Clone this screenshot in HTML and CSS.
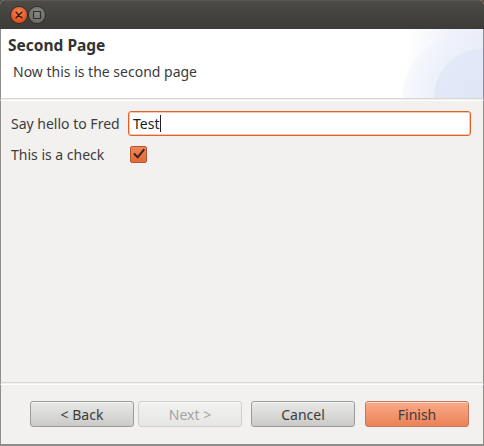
FILE: index.html
```html
<!DOCTYPE html>
<html>
<head>
<meta charset="utf-8">
<link rel="stylesheet" href="styles.css">
</head>
<body>
<div class="window">
  <div class="titlebar">
    <span class="wbtn close"><svg width="16" height="16" viewBox="0 0 16 16"><path d="M5.2 5.2 L10.8 10.8 M10.8 5.2 L5.2 10.8" stroke="#3a1a0c" stroke-width="1.5" stroke-linecap="round"/></svg></span>
    <span class="wbtn max"><svg width="16" height="16" viewBox="0 0 16 16"><rect x="4.5" y="4.5" width="7" height="7" rx="0.5" fill="none" stroke="#2e2e2c" stroke-width="1.2"/></svg></span>
  </div>
  <div class="header">
    <div class="htitle">Second Page</div>
    <div class="hdesc">Now this is the second page</div>
  </div>
  <div class="sep"></div>
  <div class="content">
    <div class="row">
      <span class="label">Say hello to Fred</span>
      <div class="input">Test<span class="caret"></span></div>
    </div>
    <div class="row row-check">
      <span class="label">This is a check</span>
      <span class="check"><svg width="14" height="14" viewBox="0 0 14 14"><path d="M2.5 7 L5.6 10.4 L11.8 2.8" fill="none" stroke="#3e2418" stroke-width="2" stroke-linecap="round" stroke-linejoin="round"/></svg></span>
    </div>
  </div>
  <div class="sep sep-bottom"></div>
  <div class="buttons">
    <button class="btn">&lt; Back</button>
    <button class="btn disabled">Next &gt;</button>
    <button class="btn gap">Cancel</button>
    <button class="btn primary">Finish</button>
  </div>
</div>
</body>
</html>
```
FILE: styles.css
```css
html, body {
  margin: 0;
  padding: 0;
  background: #5b4b40;
}
body {
  font-family: "Noto Sans", "DejaVu Sans", sans-serif;
  font-size: 14px;
  color: #3c3c3c;
}
.window {
  width: 484px;
  height: 446px;
  display: flex;
  flex-direction: column;
  background: #f2f1f0;
  border-radius: 5px 5px 0 0;
  overflow: hidden;
  box-sizing: border-box;
}
.titlebar {
  height: 29px;
  flex: none;
  background: linear-gradient(#4c4b46, #3c3b37);
  display: flex;
  align-items: center;
  padding-left: 11px;
  gap: 2px;
  box-sizing: border-box;
  border-top: 1px solid #5a5954;
}
.wbtn {
  width: 16px;
  height: 16px;
  border-radius: 50%;
  display: flex;
}
.close {
  background: radial-gradient(circle at 50% 35%, #f58a5b, #e0501c 70%, #c3420f);
  box-shadow: 0 0 0 1px #2e2d2a;
}
.max {
  background: radial-gradient(circle at 50% 35%, #8a8a85, #6c6b66 75%);
  box-shadow: 0 0 0 1px #2e2d2a;
}
.header {
  height: 69px;
  flex: none;
  background:
    radial-gradient(ellipse 50px 50px at 100% 100%, rgba(221,229,246,0.85), rgba(223,230,246,0.75) 97%, rgba(223,230,246,0) 100%),
    radial-gradient(ellipse 82px 72px at 100% 100%, rgba(233,238,250,0.85) 50%, rgba(240,243,251,0.5) 97%, rgba(255,255,255,0) 100%),
    linear-gradient(90deg, rgba(255,255,255,1) 84%, rgba(255,255,255,0) 100%),
    #e4e9f7;
  border-left: 1px solid #8e8d89;
  border-right: 1px solid #8e8d89;
  box-sizing: border-box;
}
.htitle {
  font-weight: bold;
  font-size: 15.5px;
  padding: 6px 0 0 7px;
  line-height: 20px;
  color: #333333;
}
.hdesc {
  padding: 7px 0 0 12px;
  line-height: 20px;
}
.sep {
  height: 3px;
  flex: none;
  border-top: 1px solid #d6d5d3;
  border-bottom: 1px solid #ffffff;
  background: #f2f1f0;
  box-sizing: border-box;
  border-left: 1px solid #8e8d89;
  border-right: 1px solid #8e8d89;
}
.sep.sep-bottom {
  border-top: 1px solid #d8d7d5;
}
.content {
  flex: 1;
  border-left: 1px solid #8e8d89;
  border-right: 1px solid #8e8d89;
  padding: 10px 12px 0 10px;
  display: flex;
  flex-direction: column;
  gap: 6px;
}
.row {
  display: flex;
  align-items: center;
  gap: 6px;
}
.label {
  width: 111px;
  flex: none;
}
.input {
  flex: 1;
  height: 25px;
  box-sizing: border-box;
  border: 1px solid #e0612a;
  border-radius: 3px;
  background: #ffffff;
  box-shadow: inset 0 0 0 1px #f6c8b4;
  padding: 0 4px;
  line-height: 22px;
  color: #222;
  display: flex;
  align-items: center;
}
.caret {
  display: inline-block;
  width: 1px;
  height: 17px;
  background: #222;
  margin-left: 1px;
}
.row-check {
  height: 24px;
}
.check {
  width: 15px;
  height: 15px;
  margin-left: 2px;
  border: 1px solid #b4552b;
  border-radius: 2px;
  background: linear-gradient(#f0845a, #e06a3a);
  display: flex;
  align-items: center;
  justify-content: center;
}
.buttons {
  height: 61px;
  flex: none;
  display: flex;
  align-items: flex-start;
  padding: 16px 0 0 29px;
  gap: 4px;
  border-left: 1px solid #8e8d89;
  border-right: 1px solid #8e8d89;
  border-bottom: 2px solid #8e8d89;
  box-sizing: border-box;
}
.btn {
  width: 104px;
  height: 26px;
  font-family: inherit;
  font-size: 14px;
  color: #3c3c3c;
  border: 1px solid #9b9b99;
  border-radius: 3px;
  background: linear-gradient(#e9e9e8, #cacac8);
  padding: 0;
  box-shadow: inset 0 1px 0 rgba(255,255,255,0.6);
}
.btn.disabled {
  color: #a3a3a1;
  border-color: #cfcfcd;
  background: linear-gradient(#f1f1f0, #e6e6e5);
}
.btn.gap {
  margin-left: 5px;
}
.btn.primary {
  margin-left: 6px;
  border-color: #c17a5c;
  background: linear-gradient(#f9ab8a, #ec8156);
}
```
